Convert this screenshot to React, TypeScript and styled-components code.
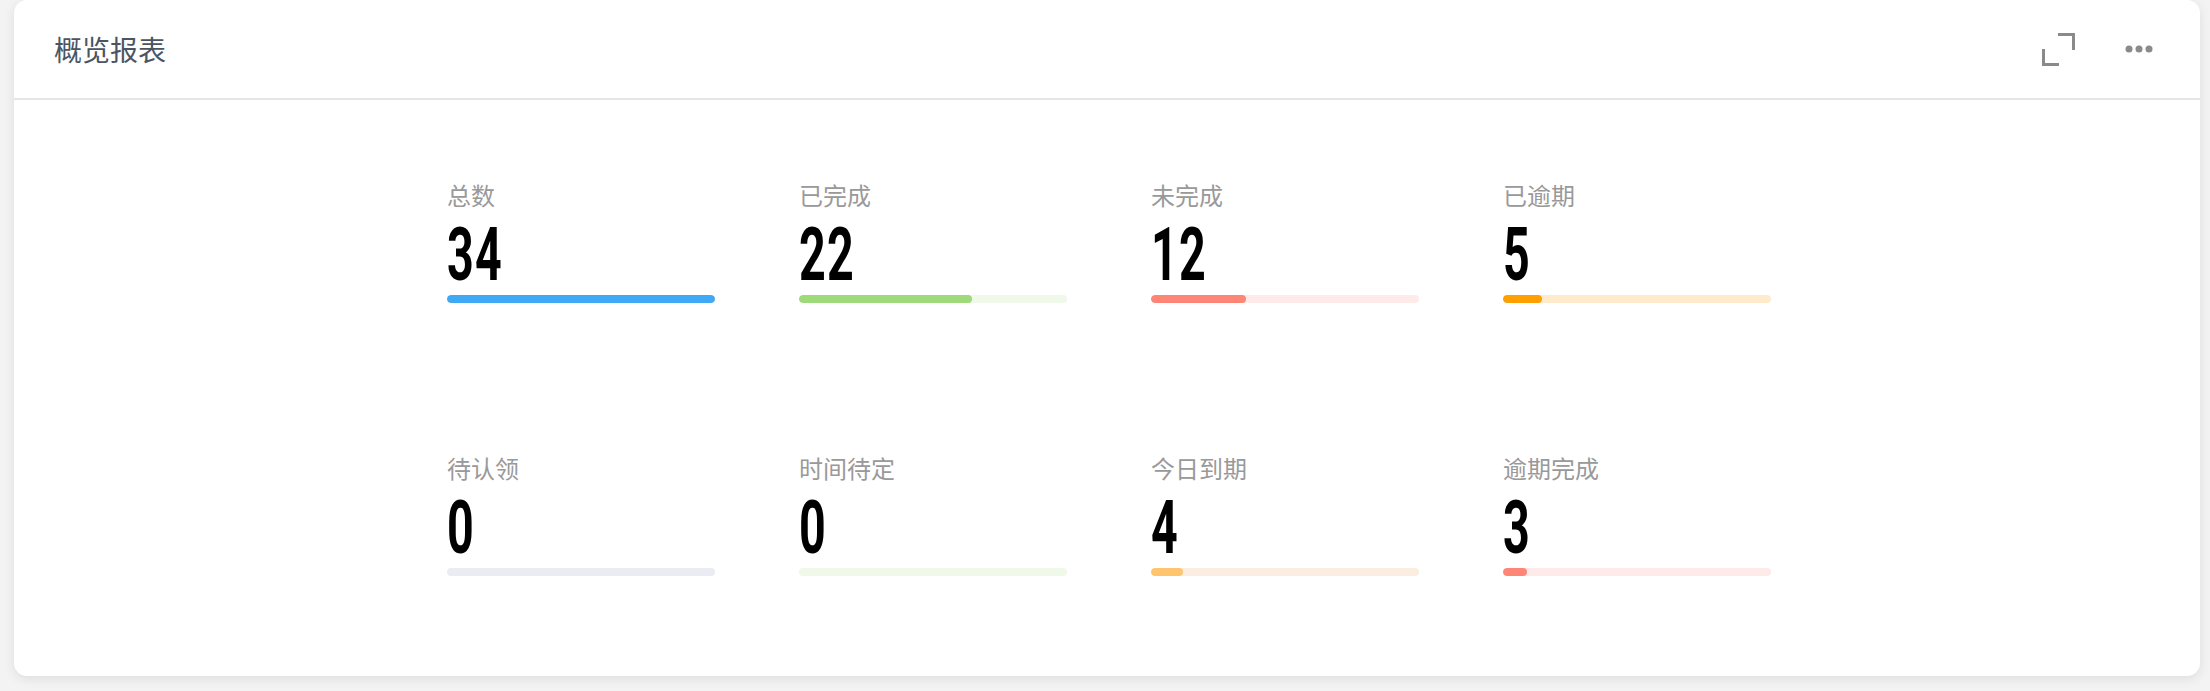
import React from "react";
import styled, { createGlobalStyle } from "styled-components";

const GlobalStyle = createGlobalStyle`
  html, body {
    margin: 0;
    padding: 0;
    background: #f3f3f3;
    font-family: "Noto Sans CJK SC", "Noto Sans", sans-serif;
  }
  #root { padding: 0 10px 15px 14px; }
`;

const Card = styled.section`
  background: #ffffff;
  border-radius: 13px;
  box-shadow: 0 3px 12px rgba(0, 0, 0, 0.09);
  overflow: hidden;
`;

const Header = styled.header`
  height: 98px;
  border-bottom: 2px solid #e6e6e6;
  display: flex;
  align-items: center;
  padding: 0 47px 0 40px;
`;

const Title = styled.h2`
  margin: 0;
  flex: 1;
  font-size: 28px;
  font-weight: 400;
  color: #4a5561;
  line-height: 32px;
`;

const Tools = styled.div`
  display: flex;
  align-items: center;
  gap: 50px;
`;

const IconButton = styled.button`
  border: 0;
  background: none;
  padding: 0;
  display: flex;
  align-items: center;
  color: #8a8a8a;
  cursor: pointer;
`;

const Body = styled.div`
  padding: 79px 0 100px 4px;
  display: grid;
  grid-template-columns: repeat(4, 268px);
  column-gap: 84px;
  row-gap: 149px;
  justify-content: center;
`;

const Stat = styled.div`
  display: flex;
  flex-direction: column;
`;

const Label = styled.div`
  font-size: 24px;
  line-height: 32px;
  color: #999999;
`;

const Value = styled.div`
  margin-top: 6px;
  height: 76px;
  font-family: Roboto, "Liberation Sans", sans-serif;
  font-weight: 700;
  font-size: 74px;
  line-height: 76px;
  color: #000000;
  letter-spacing: 2px;
  transform: scaleX(0.63);
  transform-origin: left center;
`;

const Track = styled.div<{ $bg: string }>`
  margin-top: 2px;
  height: 8px;
  border-radius: 4px;
  background: ${(p) => p.$bg};
  overflow: hidden;
`;

const Fill = styled.div<{ $color: string }>`
  height: 100%;
  border-radius: 4px;
  background: ${(p) => p.$color};
`;

const TOTAL = 34;

const stats = [
  { label: "总数", value: 34, color: "#40a9f5", bg: "#e8f4fd" },
  { label: "已完成", value: 22, color: "#9ed97a", bg: "#f0f8e9" },
  { label: "未完成", value: 12, color: "#ff8577", bg: "#ffeaea" },
  { label: "已逾期", value: 5, color: "#ff9f00", bg: "#ffebcc" },
  { label: "待认领", value: 0, color: "#b8b8d0", bg: "#ebebf3" },
  { label: "时间待定", value: 0, color: "#9ed97a", bg: "#f0f8e9" },
  { label: "今日到期", value: 4, color: "#ffc56e", bg: "#fbeee0" },
  { label: "逾期完成", value: 3, color: "#ff8577", bg: "#ffeaea" },
];

const ExpandIcon = () => (
  <svg width="33" height="33" viewBox="0 0 33 33" fill="none" stroke="currentColor" strokeWidth="3">
    <path d="M16 1.5 H31.5 V17" />
    <path d="M1.5 16 V31.5 H17" />
  </svg>
);

const MoreIcon = () => (
  <svg width="28" height="8" viewBox="0 0 28 8" fill="currentColor">
    <circle cx="4" cy="4" r="3.5" />
    <circle cx="14" cy="4" r="3.5" />
    <circle cx="24" cy="4" r="3.5" />
  </svg>
);

export default function App() {
  return (
    <>
      <GlobalStyle />
      <Card>
        <Header>
          <Title>概览报表</Title>
          <Tools>
            <IconButton aria-label="全屏">
              <ExpandIcon />
            </IconButton>
            <IconButton aria-label="更多">
              <MoreIcon />
            </IconButton>
          </Tools>
        </Header>
        <Body>
          {stats.map((s) => (
            <Stat key={s.label}>
              <Label>{s.label}</Label>
              <Value>{s.value}</Value>
              <Track $bg={s.bg}>
                <Fill $color={s.color} style={{ width: `${(s.value / TOTAL) * 100}%` }} />
              </Track>
            </Stat>
          ))}
        </Body>
      </Card>
    </>
  );
}
